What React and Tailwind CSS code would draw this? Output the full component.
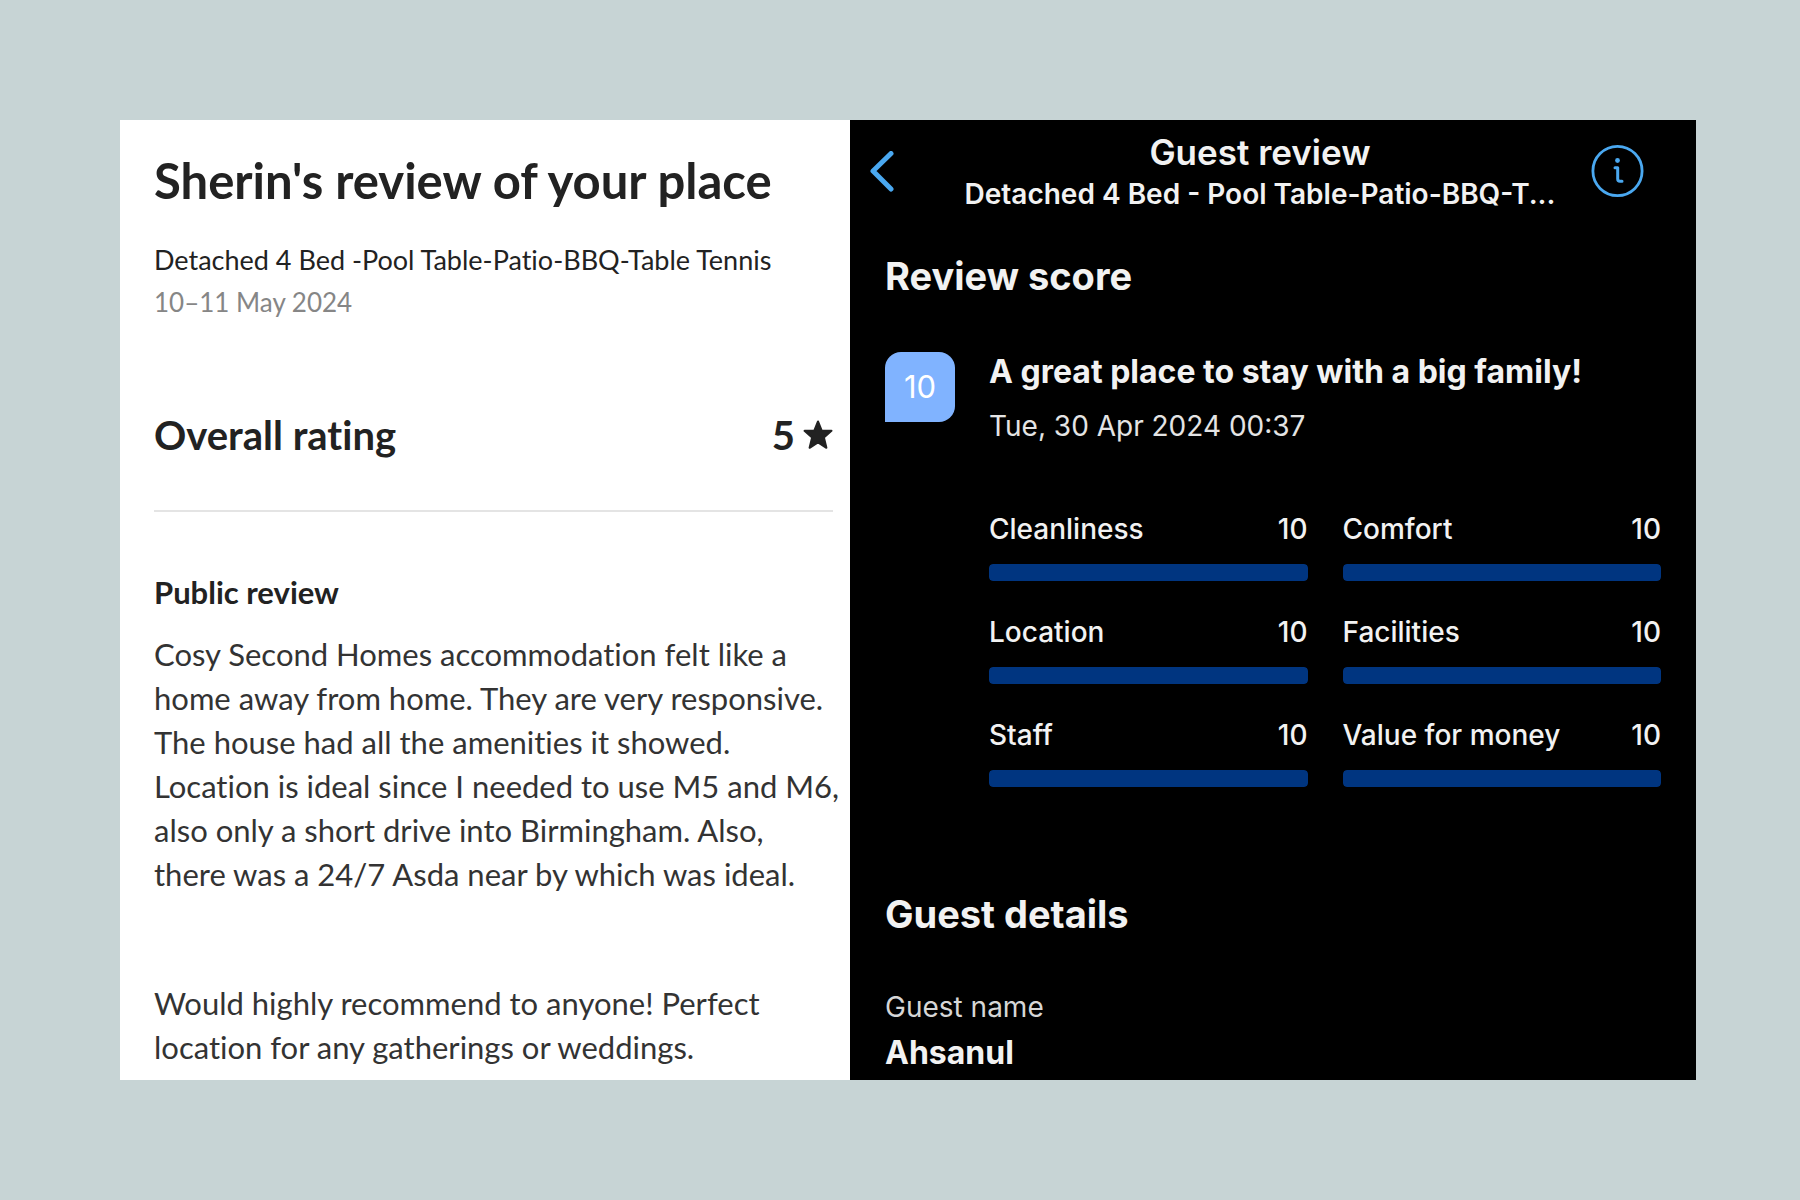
const SCORES = [
  { label: 'Cleanliness', score: 10 },
  { label: 'Comfort', score: 10 },
  { label: 'Location', score: 10 },
  { label: 'Facilities', score: 10 },
  { label: 'Staff', score: 10 },
  { label: 'Value for money', score: 10 },
]

const StarIcon = () => (
  <svg className="w-[30px] h-[30px]" viewBox="0 0 30 30" fill="currentColor" stroke="currentColor" strokeWidth="2" strokeLinejoin="round" aria-hidden="true">
    <path d="M15 1.5l3.8 9.3h9.7l-7.6 6.6 2.5 10.4L15 22.4l-8.4 5.4 2.5-10.4-7.6-6.6h9.7z" />
  </svg>
)

const BackIcon = () => (
  <svg className="w-6 h-[42px]" viewBox="0 0 24 42" fill="none" stroke="currentColor" strokeWidth="5" strokeLinecap="round" strokeLinejoin="round" aria-hidden="true">
    <path d="M21 2.5L3 20l18 18" />
  </svg>
)

const InfoIcon = () => (
  <svg className="w-[54px] h-[54px]" viewBox="0 0 54 54" fill="none" stroke="currentColor" strokeLinecap="round" strokeLinejoin="round" aria-hidden="true">
    <circle cx="27.5" cy="26" r="24.6" strokeWidth="2.8" />
    <circle cx="27.5" cy="15.5" r="2.4" fill="currentColor" stroke="none" />
    <path d="M25 22.8h2.7v11.2q0 2.3 2.3 2.3h2" strokeWidth="3" />
  </svg>
)

const HostReview = () => (
  <section className="min-w-0 bg-white text-[#222222] font-['Lato',sans-serif] [font-variant-ligatures:none] pt-[30px] pb-[11px] pl-[34px] pr-[17px]">
    <h1 className="text-[49px] leading-[60px] font-bold whitespace-nowrap">Sherin's review of your place</h1>
    <p className="mt-[29px] text-[27px] leading-[42px] whitespace-nowrap">Detached 4 Bed -Pool Table-Patio-BBQ-Table Tennis</p>
    <p className="text-[26px] leading-[42px] text-[#868686]">10–11 May 2024</p>
    <div className="mt-[88px] pb-[51px] flex items-center justify-between border-b-2 border-[#e4e4e4] text-[40px] leading-[48px] font-bold">
      <h2>Overall rating</h2>
      <div className="flex items-center gap-2">
        <span>5</span>
        <StarIcon />
      </div>
    </div>
    <h3 className="mt-[60px] text-[31px] leading-10 font-bold">Public review</h3>
    <div className="mt-5 text-[31px] leading-[44px] text-[#333333] whitespace-nowrap">
      <p>
        Cosy Second Homes accommodation felt like a<br />
        home away from home. They are very responsive.<br />
        The house had all the amenities it showed.<br />
        Location is ideal since I needed to use M5 and M6,<br />
        also only a short drive into Birmingham. Also,<br />
        there was a 24/7 Asda near by which was ideal.
      </p>
      <p className="mt-[85px]">
        Would highly recommend to anyone! Perfect<br />
        location for any gatherings or weddings.
      </p>
    </div>
  </section>
)

const ScoreBar = ({ label, score }) => (
  <div>
    <div className="flex justify-between text-[28px] leading-10 font-medium">
      <span>{label}</span>
      <span>{score}</span>
    </div>
    <div className="mt-[15px] h-[17px] rounded-sm overflow-hidden">
      <div className="h-full rounded-sm bg-[#003580]" style={{ width: `${score * 10}%` }} />
    </div>
  </div>
)

const GuestReview = () => (
  <section className="min-w-0 bg-black text-[#f2f2f2] font-['Inter',sans-serif] pt-[10px] pb-1">
    <header className="flex items-center justify-between pl-5 pr-[52px]">
      <button type="button" aria-label="Back" className="w-[60px] text-[#4aa8f0]"><BackIcon /></button>
      <div className="text-center whitespace-nowrap">
        <h1 className="text-[35px] leading-[44px] font-semibold">Guest review</h1>
        <p className="text-[28px] leading-10 font-semibold">Detached 4 Bed - Pool Table-Patio-BBQ-T...</p>
      </div>
      <button type="button" aria-label="Information" className="text-[#4aa8f0]"><InfoIcon /></button>
    </header>
    <div className="px-[35px]">
      <h2 className="mt-[38px] text-[38px] leading-[48px] font-bold">Review score</h2>
      <div className="mt-[52px] flex gap-[34px]">
        <div className="w-[70px] h-[70px] shrink-0 flex items-center justify-center rounded-2xl rounded-bl-none bg-[#80b3ff] text-white text-[31px]">10</div>
        <div className="flex-1">
          <h3 className="text-[32px] leading-10 font-bold whitespace-nowrap">A great place to stay with a big family!</h3>
          <p className="mt-[14px] text-[28px] leading-10 text-[#e4e4e4]">Tue, 30 Apr 2024 00:37</p>
          <div className="mt-[63px] grid grid-cols-2 gap-x-[35px] gap-y-[31px]">
            {SCORES.map((s) => <ScoreBar key={s.label} label={s.label} score={s.score} />)}
          </div>
        </div>
      </div>
      <h2 className="mt-[103px] text-[38px] leading-[48px] font-bold">Guest details</h2>
      <p className="mt-[49px] text-[28px] leading-10 text-[#d6d6d6]">Guest name</p>
      <p className="mt-[6px] text-[32px] leading-10 font-bold">Ahsanul</p>
    </div>
  </section>
)

const App = () => (
  <main className="min-h-screen bg-[#c7d4d5] py-[120px] pl-[120px] pr-[104px]">
    <div className="grid grid-cols-[730fr_846fr]">
      <HostReview />
      <GuestReview />
    </div>
  </main>
)

export default App
